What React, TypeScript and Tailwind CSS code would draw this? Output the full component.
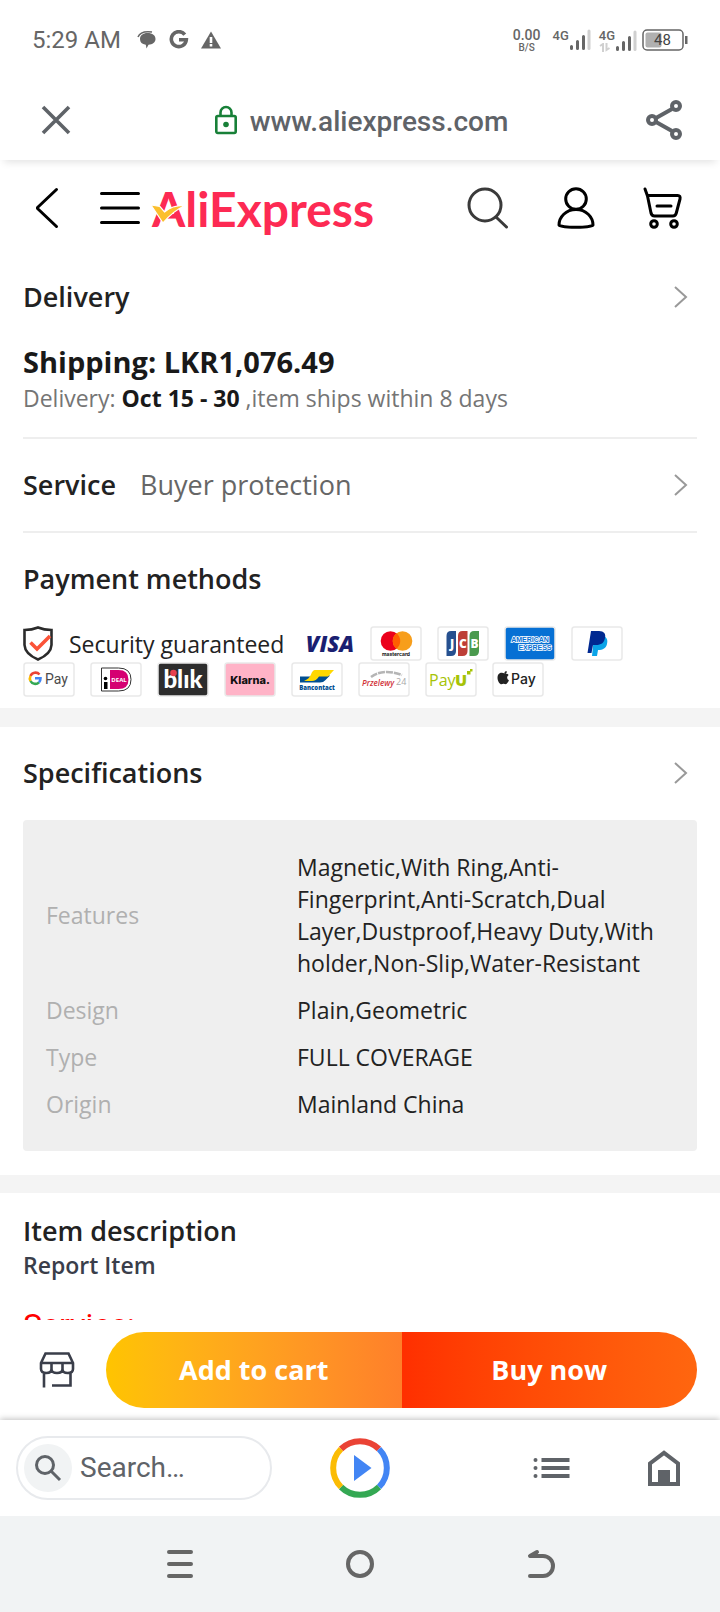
import { ReactNode } from "react";

const specs = [
  {
    label: "Features",
    value:
      "Magnetic,With Ring,Anti-Fingerprint,Anti-Scratch,Dual Layer,Dustproof,Heavy Duty,With holder,Non-Slip,Water-Resistant",
  },
  { label: "Design", value: "Plain,Geometric" },
  { label: "Type", value: "FULL COVERAGE" },
  { label: "Origin", value: "Mainland China" },
];

function SignalBars() {
  return (
    <svg width="22" height="22" viewBox="0 0 22 22" strokeWidth="3" strokeLinecap="round">
      <path d="M2.500 17.500v2M8.500 12.500v7M14.500 7.500v12" stroke="#666" />
      <path d="M20 2v17.500" stroke="#d0d0d0" />
    </svg>
  );
}

function StatusBar() {
  return (
    <div className="flex h-20 items-center justify-between pl-8 pr-[31px] font-['Roboto',sans-serif] text-[#666]">
      <div className="flex items-center">
        <span className="text-[24px] leading-8">5:29 AM</span>
        <svg className="ml-4" width="20" height="20" viewBox="0 0 20 20" fill="#666">
          <path d="M1 7C3 2 8 1 15 2" fill="none" stroke="#666" strokeWidth="1.500" />
          <path d="M10.500 3c5 0 8 2.500 8 6s-3 5.500-7 5.800L9.500 18.500 8.800 14.700C5 14.300 3 12.300 3 9c0-3.500 3-6 7.500-6z" />
        </svg>
        <svg className="ml-3" width="20" height="20" viewBox="0 0 20 20" fill="none" stroke="#666" strokeWidth="3.600">
          <path d="M15.800 4.600A7.500 7.500 0 1 0 17.300 9.800H10" />
        </svg>
        <svg className="ml-3" width="20" height="20" viewBox="0 0 20 20" fill="#666">
          <path d="M10 1.500L20 18.500H0z" />
          <path d="M8.700 7h2.600v6H8.700zM8.700 14h2.600v2.500H8.700z" fill="#fff" />
        </svg>
      </div>
      <div className="flex items-center">
        <div className="flex flex-col items-center">
          <span className="text-[14px] leading-[14px] font-medium">0.00</span>
          <span className="text-[10px] leading-[11px] font-medium">B/S</span>
        </div>
        <div className="ml-3 flex items-end">
          <span className="pb-2 text-[13px] leading-[14px] font-medium">4G</span>
          <SignalBars />
        </div>
        <div className="ml-2 flex items-end">
          <div className="flex flex-col">
            <span className="text-[13px] leading-[14px] font-medium">4G</span>
            <svg width="16" height="9" viewBox="0 0 16 9" fill="none" stroke="#d0d0d0" strokeWidth="2">
              <path d="M1 3l3-2v8M7.500 0v7l3-2" />
            </svg>
          </div>
          <SignalBars />
        </div>
        <svg className="ml-1" width="48" height="24" viewBox="0 0 48 24">
          <rect x="2" y="2" width="40" height="20" rx="4" fill="none" stroke="#666" strokeWidth="1.500" />
          <rect x="4.500" y="4.500" width="16" height="15" rx="2" fill="#b0b0b0" />
          <rect x="44" y="8" width="2.500" height="8" fill="#666" />
          <text x="21.500" y="17" fontSize="15" textAnchor="middle" fill="#444">
            48
          </text>
        </svg>
      </div>
    </div>
  );
}

function AddressBar() {
  return (
    <div className="relative z-10 flex h-20 items-center justify-between bg-white pr-[37px] pl-[41px] shadow-[0_6px_8px_-4px_rgba(0,0,0,0.12)]">
      <button aria-label="Close">
        <svg width="30" height="30" viewBox="0 0 30 30" stroke="#5f6368" strokeWidth="3.600">
          <path d="M2 2l26 26M28 2L2 28" />
        </svg>
      </button>
      <div className="ml-1.5 flex items-center gap-3">
        <svg width="24" height="30" viewBox="0 0 24 30" fill="none" stroke="#188038" strokeWidth="2.600">
          <rect x="2.300" y="11" width="19.400" height="17" rx="1.500" />
          <path d="M6.500 11V7.500a5.500 5.500 0 0 1 11 0V11" />
          <circle cx="12" cy="19.500" r="2.800" fill="#188038" stroke="none" />
        </svg>
        <span className="pt-1 font-['Roboto',sans-serif] text-[28px] leading-10 font-medium text-[#5f6368]">
          www.aliexpress.com
        </span>
      </div>
      <button aria-label="Share">
        <svg width="38" height="40" viewBox="0 0 38 40" fill="none" stroke="#5f6368" strokeWidth="4">
          <path d="M11 18L27 9M11 22L27 31" />
          <circle cx="31" cy="6" r="4" />
          <circle cx="31" cy="34" r="4" />
          <circle cx="7" cy="20" r="4" />
        </svg>
      </button>
    </div>
  );
}

function ShopHeader() {
  return (
    <header className="flex h-24 items-center pr-[37px] pl-[35px]">
      <button aria-label="Back">
        <svg width="24" height="42" viewBox="0 0 24 42" fill="none" stroke="#000" strokeWidth="3" strokeLinecap="round" strokeLinejoin="round">
          <path d="M21.500 2.500L2.500 20.500v1L21.500 39.500" />
        </svg>
      </button>
      <button aria-label="Menu" className="ml-10">
        <svg width="42" height="34" viewBox="0 0 42 34" stroke="#000" strokeWidth="3" strokeLinecap="round">
          <path d="M2.500 2.500h37M2.500 17h37M2.500 31.500h37" />
        </svg>
      </button>
      <a href="#home" aria-label="AliExpress" className="ml-2.5">
        <svg width="230" height="60" viewBox="0 0 230 60">
          <text x="1" y="49" fontFamily="Lato, sans-serif" fontSize="48" fontWeight="700" fill="#fd2a53">
            AliExpress
          </text>
          <path d="M0 27l9 1.500 4.500 5.500Q22 27 34 27.500 22 33 12 45z" fill="#fbbf2d" stroke="#fff" strokeWidth="1.200" />
        </svg>
      </a>
      <div className="ml-auto flex items-center gap-12">
        <button aria-label="Search">
          <svg width="42" height="42" viewBox="0 0 42 42" fill="none" stroke="#3a3a3a" strokeWidth="3" strokeLinecap="round">
            <circle cx="18" cy="18" r="16" />
            <path d="M29.500 30.500L39.500 40" />
          </svg>
        </button>
        <button aria-label="Account">
          <svg width="38" height="42" viewBox="0 0 38 42" fill="none" stroke="#000" strokeWidth="3">
            <circle cx="19" cy="12" r="10.300" />
            <path d="M19 22.500C9 22.500 2 30 2 38c0 3 34 3 34 0 0-8-7-15.500-17-15.500z" strokeLinejoin="round" />
          </svg>
        </button>
        <button aria-label="Cart">
          <svg width="40" height="42" viewBox="0 0 40 42" fill="none" stroke="#000" strokeWidth="3" strokeLinecap="round" strokeLinejoin="round">
            <path d="M2 2l2.500 7 3.500 17q.8 3 3.500 3h18.500q2.500 0 3.300-3l3.700-14q.7-3.500-2.300-3.500H4.500M14 19h14" />
            <circle cx="11" cy="37" r="3.300" />
            <circle cx="31" cy="37" r="3.300" />
          </svg>
        </button>
      </div>
    </header>
  );
}

function Chevron() {
  return (
    <svg className="mr-2" width="16" height="24" viewBox="0 0 16 24" fill="none" stroke="#999" strokeWidth="2">
      <path d="M2 2l11 10L2 22" />
    </svg>
  );
}

function Badge({ label, fill = "#fff", children }: { label: string; fill?: string; children: ReactNode }) {
  return (
    <svg className="mr-[15px]" width="52" height="35" viewBox="0 0 52 35" role="img" aria-label={label}>
      <rect x="1" y="1" width="50" height="33" rx="2.500" fill={fill} stroke={label === "Visa" ? "none" : "#e9e9e9"} strokeWidth="1.500" />
      {children}
    </svg>
  );
}

function PaymentMethods() {
  return (
    <div className="flex flex-wrap gap-y-px">
      <div className="flex w-[280px] items-center gap-4">
        <svg width="30" height="35" viewBox="0 0 30 35" fill="none">
          <path d="M15 1.500Q21 4 28.500 4v15Q28 28 15 33.500 2 28 1.500 19V4Q9 4 15 1.500z" stroke="#2b2b2b" strokeWidth="2.600" />
          <path d="M7.500 16.500l6.500 6.500L27 10" stroke="#fb5338" strokeWidth="3.600" />
        </svg>
        <span className="text-[23px] leading-8 whitespace-nowrap text-[#222]">Security guaranteed</span>
      </div>
      <Badge label="Visa">
        <text x="27" y="25.500" fontFamily="Open Sans" fontSize="22" fontWeight="800" fontStyle="italic" textAnchor="middle" fill="#1a1f71">
          VISA
        </text>
      </Badge>
      <Badge label="Mastercard">
        <circle cx="20.500" cy="15" r="9.800" fill="#eb001b" />
        <circle cx="32.500" cy="15" r="9.800" fill="#f79e1b" />
        <path d="M26.500 7.300a9.800 9.800 0 0 1 0 15.400 9.800 9.800 0 0 1 0-15.400z" fill="#ff5f00" />
        <text x="26" y="30" fontFamily="Inter" fontSize="5" fontWeight="700" textAnchor="middle" fill="#111">
          mastercard
        </text>
      </Badge>
      <Badge label="JCB">
        <path d="M14 5h5v20q0 5-5 5H9.500V10q0-5 4.500-5z" fill="#26508f" />
        <path d="M25.500 5h5v20q0 5-5 5H21V10q0-5 4.500-5z" fill="#bd3f37" />
        <path d="M37 5h5v20q0 5-5 5h-4.500V10q0-5 4.500-5z" fill="#4a9a4e" />
        <g fontFamily="Open Sans" fontSize="12" fontWeight="800" textAnchor="middle" fill="#fff">
          <text x="15" y="22">J</text>
          <text x="26" y="22">C</text>
          <text x="37.500" y="22">B</text>
        </g>
      </Badge>
      <Badge label="American Express" fill="#0670d4">
        <g fontFamily="Liberation Sans" fontWeight="700" textAnchor="middle" fill="#0670d4" stroke="#fff" strokeWidth="1.600" paintOrder="stroke">
          <text x="26" y="16" fontSize="7">AMERICAN</text>
          <text x="31" y="24" fontSize="7">EXPRESS</text>
        </g>
      </Badge>
      <Badge label="PayPal">
        <path d="M23 10h9c4 1 5 4 4 8-1 4-4 6-9 6l-1 6h-5z" fill="#0aa4e8" />
        <path d="M20 5h8c5 0 7 3 6 7-1 5-4 7-9 7h-3l-1.500 8H16.500z" fill="#002991" />
      </Badge>
      <Badge label="Google Pay">
        <g fill="none" strokeWidth="2.600">
          <path d="M16.500 12.500A5.300 5.300 0 0 0 7.500 14" stroke="#ea4335" />
          <path d="M7.500 14a5.300 5.300 0 0 0 0 5" stroke="#fbbc04" />
          <path d="M7.500 19a5.300 5.300 0 0 0 8.500 1.300" stroke="#34a853" />
          <path d="M16 20.300q1.500-1.500 1.500-4h-5.500" stroke="#4285f4" />
        </g>
        <text x="22" y="21.500" fontFamily="Roboto" fontSize="14" fill="#4a4a4a">
          Pay
        </text>
      </Badge>
      <Badge label="iDEAL">
        <path d="M11.500 6h17q12.500 0 12.500 11.500T28.500 29h-17z" fill="#fff" stroke="#333" />
        <path d="M20 8h8.500q10 0 10 9.500t-10 9.500H20z" fill="#d50072" />
        <circle cx="15.500" cy="16.500" r="1.800" />
        <path d="M14 20h3.500v7H14z" />
        <text x="29" y="20" fontFamily="Open Sans" fontSize="6" fontWeight="700" textAnchor="middle" fill="#fff">
          DEAL
        </text>
      </Badge>
      <Badge label="BLIK" fill="#2d2d2d">
        <text x="26" y="26" fontFamily="Lato" fontSize="24" fontWeight="900" textAnchor="middle" fill="#fff">
          blık
        </text>
        <circle cx="16.500" cy="11" r="3.300" fill="#e8404e" />
      </Badge>
      <Badge label="Klarna" fill="#ffb3c7">
        <text x="26" y="22" fontFamily="Inter" fontSize="11" fontWeight="800" textAnchor="middle" fill="#111">
          Klarna.
        </text>
      </Badge>
      <Badge label="Bancontact">
        <path d="M9 14.500h13l8-2 9 1-5 5q-1.500 2-5 2H9z" fill="#004e91" />
        <path d="M24 8h19l-6 6.500h-9q-3 4.500-7 4.500H13q5-2 7-6.500 1.500-4.500 4-4.500z" fill="#ffd800" />
        <text x="26" y="28" fontFamily="Open Sans" fontSize="6" fontWeight="800" textAnchor="middle" fill="#004e91">
          Bancontact
        </text>
      </Badge>
      <Badge label="Przelewy24">
        <path d="M13 15Q25 6 44 13" fill="none" stroke="#b5b5b5" strokeWidth="2.500" strokeDasharray="7 1" />
        <text x="4" y="24" fontFamily="Open Sans" fontSize="8" fontWeight="600" fontStyle="italic" fill="#d13239">
          Przelewy
        </text>
        <text x="38" y="23" fontFamily="Open Sans" fontSize="9" fill="#a9a9a9">
          24
        </text>
      </Badge>
      <Badge label="PayU">
        <text x="4" y="24" fontFamily="Open Sans" fontSize="16" fill="#a6c307">
          Pay
        </text>
        <text x="30" y="24" fontFamily="Open Sans" fontSize="16" fontWeight="800" fill="#a6c307">
          U
        </text>
        <path d="M42 9h3.500v3.500H42zM45 7h2.500v2.500H45z" fill="#a6c307" />
      </Badge>
      <Badge label="Apple Pay">
        <path d="M14.500 11.800c1.500-1 1.700-2.300.7-2.800-1.400.4-2 1.500-1.600 2.500-2-1-5.100-1.200-6.600 1.500-1.300 3 .2 8 2.800 9.200 1.200.4 1.800-.7 3-.4 1.300.4 2.300 1 3.500-.7.800-1 1.200-1.700 1.600-2.800-2.200-1.400-2.400-4-.3-5.400-.8-1.200-1.800-1.500-3.100-1.100z" fill="#222" transform="translate(-1 0)" />
        <text x="19" y="22" fontFamily="Inter" fontSize="14" fontWeight="500" fill="#222">
          Pay
        </text>
      </Badge>
    </div>
  );
}

function BuyBar() {
  return (
    <div className="flex h-[100px] shrink-0 items-center bg-white pr-[23px] pl-[39px]">
      <button aria-label="Store">
        <svg width="36" height="38" viewBox="0 0 36 38" fill="none" stroke="#3a3e4a" strokeWidth="2.600">
          <path d="M6.500 2.500h23L34 12v6q0 4-5.300 4T23.500 18q0 4-5.500 4t-5.500-4q0 4-5.200 4T2 18v-6zM2 12h32M12.500 12v6M23.500 12v6M5 22v14.500M31.500 22v12.500H13" />
        </svg>
      </button>
      <div className="ml-[31px] flex h-[76px] flex-1 overflow-hidden rounded-full text-[27px] font-bold text-white">
        <button className="flex-1 bg-linear-to-r from-[#ffc400] to-[#ff7f2a]">Add to cart</button>
        <button className="flex-1 bg-linear-to-r from-[#ff2f00] to-[#ff660f]">Buy now</button>
      </div>
    </div>
  );
}

function BrowserBar() {
  return (
    <div className="relative flex h-24 shrink-0 items-center justify-between bg-white pr-[39px] pl-4 shadow-[0_-1px_6px_rgba(0,0,0,0.25)]">
      <label className="flex h-16 w-64 items-center gap-2 rounded-full border-2 border-[#e8eaed] pl-1.5">
        <span className="flex size-12 shrink-0 items-center justify-center rounded-full bg-[#f1f3f4]">
          <svg width="28" height="28" viewBox="0 0 28 28" fill="none" stroke="#5f6368" strokeWidth="3">
            <circle cx="11" cy="11" r="8.500" />
            <path d="M17 17l9 9" />
          </svg>
        </span>
        <input
          aria-label="Search"
          placeholder="Search…"
          className="w-full min-w-0 bg-transparent font-['Roboto',sans-serif] text-[28px] outline-none placeholder:text-[#5f6368]"
        />
      </label>
      <button aria-label="Play">
        <svg width="60" height="60" viewBox="0 0 60 60" fill="none" strokeWidth="6">
          <path d="M11 11a27 27 0 0 1 38 0" stroke="#ea4335" />
          <path d="M49 11a27 27 0 0 1 0 38" stroke="#4285f4" />
          <path d="M49 49a27 27 0 0 1-38 0" stroke="#34a853" />
          <path d="M11 49a27 27 0 0 1 0-38" stroke="#fbbc04" />
          <path d="M24 17v26l17.500-13z" fill="#4285f4" />
        </svg>
      </button>
      <div className="flex w-[233px] items-center justify-end gap-[77px]">
        <button aria-label="List">
          <svg width="37" height="22" viewBox="0 0 37 22" fill="#5f6368">
            <path d="M8.500 1h28v4h-28zM8.500 9h28v4h-28zM8.500 17h28v4h-28z" />
            <circle cx="2.500" cy="3" r="2" />
            <circle cx="2.500" cy="11" r="2" />
            <circle cx="2.500" cy="19" r="2" />
          </svg>
        </button>
        <button aria-label="Home">
          <svg width="34" height="36" viewBox="0 0 34 36">
            <path d="M3 34V13.500L17 2.800l14 10.700V34z" fill="none" stroke="#5f6368" strokeWidth="4" />
            <path d="M11 20h12v13H11z" fill="#5f6368" />
          </svg>
        </button>
      </div>
    </div>
  );
}

function SystemNav() {
  return (
    <nav className="relative flex h-24 shrink-0 items-center justify-center gap-[150px] bg-[#f1f3f4]">
      <button aria-label="Recent apps">
        <svg width="30" height="30" viewBox="0 0 30 30" stroke="#666" strokeWidth="4" strokeLinecap="round">
          <path d="M4 3h22M4 15h22M4 27h22" />
        </svg>
      </button>
      <button aria-label="Home screen">
        <svg width="30" height="30" viewBox="0 0 30 30" fill="none" stroke="#666" strokeWidth="4">
          <circle cx="15" cy="15" r="12" />
        </svg>
      </button>
      <button aria-label="Go back">
        <svg width="30" height="30" viewBox="0 0 30 30" fill="none" stroke="#666" strokeWidth="4" strokeLinejoin="round" strokeLinecap="round">
          <path d="M12 3L5 7h13a10 10 0 0 1 0 20H5" />
        </svg>
      </button>
    </nav>
  );
}

export default function App() {
  return (
    <div className="flex h-screen flex-col overflow-hidden bg-white font-['Open_Sans',sans-serif]">
      <StatusBar />
      <AddressBar />
      <main className="min-h-0 flex-1 overflow-hidden text-[#222]">
        <ShopHeader />

        <section className="px-[23px] pt-[23px] pb-[11px]">
          <div className="flex items-center justify-between">
            <h2 className="text-[27px] leading-9 font-semibold">Delivery</h2>
            <Chevron />
          </div>
          <p className="mt-[27px] text-[29px] leading-10 font-bold text-[#191919]">Shipping: LKR1,076.49</p>
          <p className="border-b-2 border-[#eee] pb-[23px] text-[23px] leading-8 text-[#757575]">
            Delivery: <b className="text-[#191919]">Oct 15 - 30</b> ,item ships within 8 days
          </p>
          <div className="flex items-center border-b-2 border-[#eee] py-7 text-[27px] leading-9">
            <h2 className="font-semibold">Service</h2>
            <span className="ml-6 text-[#666]">Buyer protection</span>
            <span className="ml-auto">
              <Chevron />
            </span>
          </div>
          <h2 className="pt-7 pb-[29px] text-[27px] leading-9 font-semibold">Payment methods</h2>
          <PaymentMethods />
        </section>

        <section className="border-t-[19px] border-[#f4f4f4] px-[23px] pt-7 pb-6">
          <div className="flex items-center justify-between">
            <h2 className="text-[27px] leading-9 font-semibold">Specifications</h2>
            <Chevron />
          </div>
          <div className="mt-[29px] rounded-sm bg-[#efefef] px-[23px] pt-[23px] pb-6">
            <table className="w-full text-left text-[23px] leading-8">
              <tbody>
                {specs.map((spec) => (
                  <tr key={spec.label}>
                    <th className="w-[251px] pt-2 pb-[7px] font-normal text-[#b0b0b0]">{spec.label}</th>
                    <td className="pt-2 pb-[7px]">{spec.value}</td>
                  </tr>
                ))}
              </tbody>
            </table>
          </div>
        </section>

        <section className="border-t-[18px] border-[#f4f4f4] px-[23px] pt-5">
          <h2 className="text-[27px] leading-9 font-semibold">Item description</h2>
          <a href="#report" className="block text-[23px] leading-8 font-semibold text-[#3a3e4a]">
            Report Item
          </a>
          <p className="mt-6 font-['Roboto',sans-serif] text-[32px] leading-10 text-[#f00]">Service:</p>
        </section>
      </main>
      <BuyBar />
      <BrowserBar />
      <SystemNav />
    </div>
  );
}
